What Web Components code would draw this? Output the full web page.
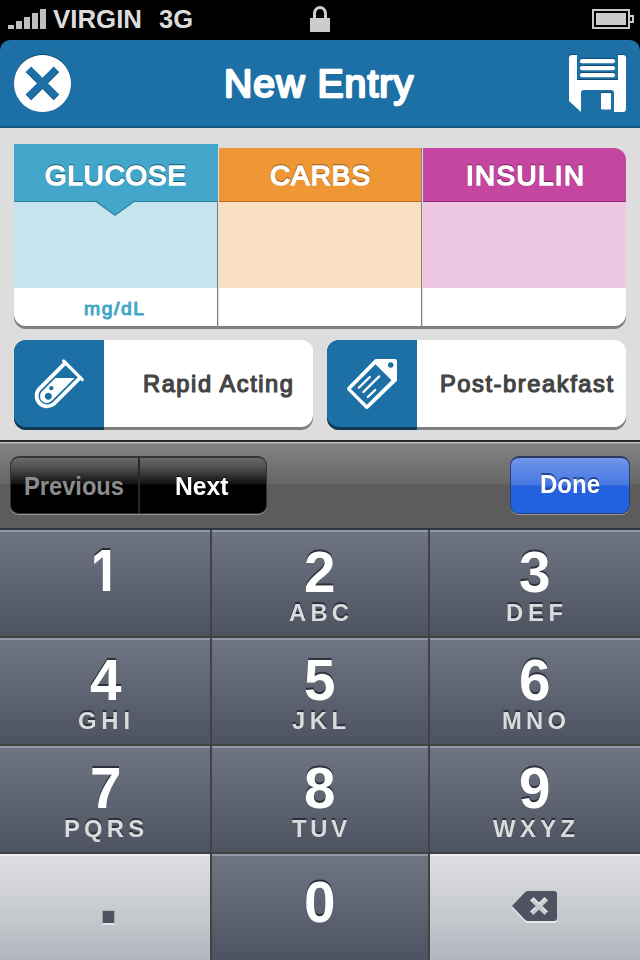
<!DOCTYPE html>
<html lang="en">
<head>
<meta charset="utf-8">
<title>New Entry</title>
<style>
html,body{margin:0;background:#000;width:640px;height:960px;overflow:hidden}
body{font-family:"Liberation Sans",sans-serif}
</style>
</head>
<body>
<entry-screen></entry-screen>
<script>
const define = (name, html) => customElements.define(name, class extends HTMLElement {
  constructor() {
    super();
    this.attachShadow({mode: 'open'}).innerHTML = html;
  }
});

// Text fitted to a width; the box runs from cap top to baseline.
customElements.define('fit-label', class extends HTMLElement {
  connectedCallback() {
    const a = (k, d) => this.getAttribute(k) || d;
    const size = +a('size', 20), w = +a('w', 100), h = Math.round(size * .688 * 10) / 10;
    const round = +a('round', 0), sx = round ? 1.03 : 1;
    const shadow = a('shadow', '');
    this.attachShadow({mode: 'open'}).innerHTML = `<style>
      :host{display:block;width:${w}px;height:${h}px;flex:none}
      svg{display:block;overflow:visible;${shadow ? `filter:drop-shadow(${shadow})` : ''}}
      text{font:${a('weight', round ? 400 : 700)} ${size}px ${a('face', '"Liberation Sans"')},"Liberation Sans",sans-serif;
        fill:currentColor;stroke:${round ? 'currentColor' : 'none'};stroke-width:${round};stroke-linejoin:round;stroke-linecap:round}
      </style><svg width="${w}" height="${h}"><text x="0" y="${h}" transform="scale(${sx} 1)" textLength="${w / sx}" lengthAdjust="${a('adjust', round ? 'spacing' : 'spacingAndGlyphs')}"></text></svg>`;
    this.shadowRoot.querySelector('text').textContent = a('text', '');
  }
});

define('status-bar', `<style>
  :host{display:flex;height:40px;background:#000;color:#dcdcdc;box-sizing:border-box;padding:0 6px 0 8px}
  svg{display:block;flex:none}
  .sig{margin-top:9px}.c{margin:9.500px 0 0 7px}.g{margin:9.500px 0 0 17px}
  .lock{margin:6px 0 0 117px}.bat{margin:9px 0 0 auto}
</style>
<svg class="sig" width="38" height="20" fill="#c0c0c0"><path d="M0 16h6v4H0zM8 12h6v8H8zM16 8h6v12h-6zM24 4h6v16h-6zM32 0h6v20h-6z"/></svg>
<fit-label class="c" text="VIRGIN" size="26.500" w="89"></fit-label>
<fit-label class="g" text="3G" size="26.500" w="34"></fit-label>
<svg class="lock" width="20" height="26"><path d="M4.500 13V7.500a5.500 6 0 0 1 11 0V13" fill="none" stroke="#ccc" stroke-width="3"/><path d="M0 12h20v14H0z" fill="#ccc"/></svg>
<svg class="bat" width="42" height="20" fill="none" stroke="#c8c8c8" stroke-width="2"><path d="M1 1h36v18H1z"/><path d="M38 7h3v6h-3"/><path d="M4 4h30v12H4z" fill="#ccc" stroke="none"/></svg>`);

define('icon-close', `<style>:host{display:block}svg{display:block;overflow:visible;filter:drop-shadow(0 -1px 0 #124c70)}</style>
<svg width="57" height="57"><path fill="#fff" fill-rule="evenodd" d="M28.500 0a28.500 28.500 0 1 0 .01 0zM17.200 11.500 28.500 22.700 39.700 11.500 45.300 17 34 28.300 45.300 39.600 39.700 45.300 28.500 34 17.200 45.300 11.600 39.600 23 28.300 11.600 17z"/></svg>`);

define('icon-save', `<style>:host{display:block}svg{display:block;overflow:visible;filter:drop-shadow(0 -1px 0 #124c70)}</style>
<svg width="57" height="57" fill="#fff"><path d="M3 0H8V25H49V0H54a3 3 0 0 1 3 3V54a3 3 0 0 1-3 3H45V38a3 3 0 0 0-3-3H15a3 3 0 0 0-3 3V57L0 46V3a3 3 0 0 1 3-3z"/><rect x="11" y="4" width="35" height="4.300" rx="2"/><rect x="11" y="11" width="35" height="4.300" rx="2"/><rect x="11" y="18" width="35" height="4.300" rx="2"/><rect x="32" y="38" width="10" height="16.500" rx="1"/></svg>`);

define('icon-tube', `<style>:host{display:block}svg{display:block;overflow:visible}</style>
<svg width="50" height="50" fill="none" stroke="#fff"><path stroke-width="3.800" d="M31.300 3.800 5.100 30.100A10.500 10.500 0 0 0 19.900 44.900L46.200 18.700"/><path stroke-width="3.200" stroke-linecap="round" d="M29.600 2 48.300 20.700"/><path fill="#fff" stroke="none" fill-rule="evenodd" d="M21.400 19H40.600L17.300 42.300A6.800 6.800 0 0 1 7.700 32.700zM14.300 33.700a3.600 3.600 0 1 0 .01 0zM17.300 27a2.100 2.100 0 1 0 .01 0z"/></svg>`);

define('icon-tag', `<style>:host{display:block}svg{display:block;overflow:visible}</style>
<svg width="52" height="51" fill="none" stroke="#fff"><path fill="#fff" stroke="none" fill-rule="evenodd" d="M30.300 1H49a2 2 0 0 1 2 2V21.500a2.500 2.500 0 0 1-.8 1.900L22.700 50a2.500 2.500 0 0 1-3.600 0L1.800 32.600a2.500 2.500 0 0 1 0-3.600L28.500 1.800A2.500 2.500 0 0 1 30.300 1zM29.500 6.200 4.900 30.900 20.800 46.800 45.500 22.200zM44.700 4.200a2.800 2.800 0 1 0 .01 0z"/><path stroke-width="2.300" stroke-linecap="round" d="M12.800 29.800 23.800 19M17.400 34 33.200 18.400M21.800 39 29.200 32"/></svg>`);

define('title-bar', `<style>
  :host{display:flex;justify-content:space-between;align-items:flex-start;height:88px;box-sizing:border-box;background:#1c70a6;border-bottom:2px solid #15567f;border-radius:10px 10px 0 0;padding:15px 14px 0;color:#fff}
  fit-label{margin-top:15.500px;margin-left:-3px}
</style><icon-close></icon-close><fit-label text="New Entry" size="38" w="189" round="2.300"></fit-label><icon-save></icon-save>`);

define('value-column', `<style>
  :host{display:flex;flex-direction:column;flex:1;height:178px;position:relative;box-sizing:border-box;border-right:1px solid #808080;background:linear-gradient(var(--c) 0 53px,var(--d) 53px 54px,var(--l) 54px 140px,#fff 140px);align-items:center;color:#fff;padding-top:17.600px;margin-right:1px}
  :host([active]){height:182px;padding-top:21.600px;background:linear-gradient(var(--c) 0 57px,var(--d) 57px 58px,var(--l) 58px 144px,#fff 144px);z-index:1;border-radius:0 0 0 12px}
  :host([last]){border-right:0;border-radius:0 12px 12px 0;margin-right:0}
  :host([active])::before{content:"";position:absolute;right:-1px;top:0;width:1px;height:57px;background:var(--c)}
  svg{display:none;position:absolute;left:81px;top:56px}
  :host([active]) svg{display:block}
  .u{color:var(--c);margin:117.600px 2px 0 0}
</style><svg width="40" height="17"><path d="M0 0H40V1.500L20 16 0 1.500z" fill="var(--d)"/><path d="M0 0H40L20 14.800 0 0z" fill="var(--c)"/></svg>
<slot></slot><div class="u"><slot name="unit"></slot></div>`);

define('option-button', `<style>
  :host{display:flex;height:90px;width:299px;border-radius:12px;overflow:hidden;background:linear-gradient(#808080 0 0) 0 100%/100% 20px no-repeat #fff;color:#444;box-sizing:border-box}
  .i{width:90px;height:90px;background:#0e3853;flex:none}
  .i div{height:87px;background:#1c70a6;box-sizing:border-box;border-radius:12px 0 0 12px;padding:19px 0 0 20px}
  .t{display:flex;flex:1;height:87px;box-sizing:border-box;background:#fff;border-radius:0 0 12px 0;justify-content:flex-end;padding:36px var(--r,20px) 0 0}
</style><div class="i"><div><slot name="icon"></slot></div></div><div class="t"><slot></slot></div>`);

define('key-toolbar', `<style>
  :host{display:flex;justify-content:space-between;box-sizing:border-box;height:88px;padding:14px 10px 0;border-top:2px solid #282828;background:linear-gradient(#c6c6c6 0 1px,#999 1px 2px,#838383 2px,#666 42px,#5c5c5c 42px 86px);color:#fff}
  .seg,.done{box-sizing:border-box;height:58px;border-radius:9px;border:1px solid #333;border-top:2px solid #363636;box-shadow:0 1px #999;display:flex}
  .seg{width:257px;background:linear-gradient(#6a6a6a 0,#4e4e4e 10px,#111 26px,#000 27px)}
  .p{width:129px;box-sizing:border-box;border-right:2px solid #292929;color:#8c8c8c;padding:20px 0 0 12.500px}
  .n{padding:20px 0 0 34.500px}
  .done{width:120px;border-color:#264078;border-top-color:#2b395e;background:linear-gradient(#7195e9,#4778e2 27px,#2360de 28px,#2363df);padding:18px 0 0 28.500px}
</style><div class="seg"><div class="p"><fit-label text="Previous" size="25" w="100"></fit-label></div><div class="n"><fit-label text="Next" size="25" w="53.500" shadow="0 -1px 0 #000"></fit-label></div></div>
<div class="done"><fit-label text="Done" size="25" w="60" shadow="0 -2px 0 #244695"></fit-label></div>`);

define('pad-key', `<style>
  :host{display:flex;flex-direction:column;align-items:center;box-sizing:border-box;color:#fff;background:linear-gradient(#9299aa 0 2px,#6e7482 2px,#4d5361);padding-top:22.600px}
  :host([light]){background:linear-gradient(#ececee 0 2px,#dedfe2 2px,#c7cacd 55%,#b1b5c0);color:#4d5361;padding-top:0}
  :host([zero]){padding-top:28.600px}
  .n{height:38.500px}
  .s{color:#dadbdd;margin:14.400px 2px 0 0}
</style><div class="n"><slot></slot></div><div class="s"><slot name="sub"></slot></div>`);

define('number-pad', `<style>
  :host{display:grid;grid-template-columns:210px 216px 210px;grid-template-rows:106px 106px 106px 106px;gap:2px;background:#424242;border-top:2px solid #2e3542;height:430px;overflow:hidden}
  .del{margin:37px 0 0 -2px;display:block;overflow:visible;filter:drop-shadow(0 2px 0 #e6e7e9)}
  .dot{margin:12.600px 0 0 7px}
  .one{margin:-.4px 4px 0 0}
  .left{margin-left:1px}
</style>` + [['1'],['2','ABC',60],['3','DEF',57],['4','GHI',52],['5','JKL',54],['6','MNO',64],['7','PQRS',80],['8','TUV',55],['9','WXYZ',82]].map(([n, s, w]) =>
  `<pad-key>${n === '1' ? '<fit-label class="one" text="1" face="Inter" size="56" w="21.500"' : `<fit-label text="${n}" size="56.500" w="31.500"${n === '4' || n === '7' ? ' class="left"' : ''}`} shadow="0 -2px 0 #2b303a"></fit-label>${s ? `<fit-label slot="sub" text="${s}" size="23.800" w="${w}" adjust="spacing" shadow="0 -2px 0 #2b303a"></fit-label>` : ''}</pad-key>`).join('') +
`<pad-key light><fit-label class="dot" text="." size="82" w="23" shadow="0 2px 0 #e3e4e6"></fit-label></pad-key>
<pad-key zero><fit-label text="0" size="56.500" w="31.500" shadow="0 -2px 0 #2b303a"></fit-label></pad-key>
<pad-key light><svg class="del" width="45" height="30"><path fill="#4d5361" fill-rule="evenodd" d="M13 1.200Q14.500 0 16 0H42Q45 0 45 3V27Q45 30 42 30H16Q14.500 30 13 28.800L0 15zM21.500 6 18 9.500 23.700 15 18 20.500 21.500 24 27 18.500 32.500 24 36 20.500 30.500 15 36 9.500 32.500 6 27 11.500z"/></svg></pad-key>`);

define('entry-screen', `<style>
  :host{display:flex;flex-direction:column;width:640px;height:960px}
  main{height:312px;box-sizing:border-box;background:#ddd;padding:16px 14px 0}
  .cols{display:flex;align-items:flex-end;height:182px}
  .shade{padding-bottom:3px;border-radius:0 0 12px 12px;background:linear-gradient(#808080 0 0) 0 100%/14px 15px no-repeat,linear-gradient(#808080 0 0) 100% 100%/14px 15px no-repeat,linear-gradient(#808080 0 0) 0 100%/100% 3px no-repeat}
  .opts{display:flex;justify-content:space-between;margin-top:11px}
</style>
<status-bar></status-bar><title-bar></title-bar>
<main><div class="shade"><div class="cols">
<value-column active style="--c:#42a7ca;--d:#2c7d99;--l:#c6e4ee"><fit-label text="GLUCOSE" size="27" w="141" round="1.700" shadow="0 -1px 0 #235b6e"></fit-label><fit-label slot="unit" text="mg/dL" size="18.800" w="60" round="1"></fit-label></value-column>
<value-column style="--c:#ef9635;--d:#b56c20;--l:#fadfc2"><fit-label text="CARBS" size="27" w="100" round="1.700" shadow="0 -1px 0 #8c581d"></fit-label></value-column>
<value-column last style="--c:#c546a0;--d:#8e2c72;--l:#eec7e3"><fit-label text="INSULIN" size="27" w="118" round="1.700" shadow="0 -1px 0 #722459"></fit-label></value-column>
</div></div>
<div class="opts">
<option-button><icon-tube slot="icon"></icon-tube><fit-label text="Rapid Acting" size="23" w="150" round="1.200"></fit-label></option-button>
<option-button style="--r:13.500px"><icon-tag slot="icon" style="margin:-1px 0 0 -1px"></icon-tag><fit-label text="Post-breakfast" size="23" w="173" round="1.200"></fit-label></option-button>
</div></main>
<key-toolbar></key-toolbar><number-pad></number-pad>`);
</script>
</body>
</html>
